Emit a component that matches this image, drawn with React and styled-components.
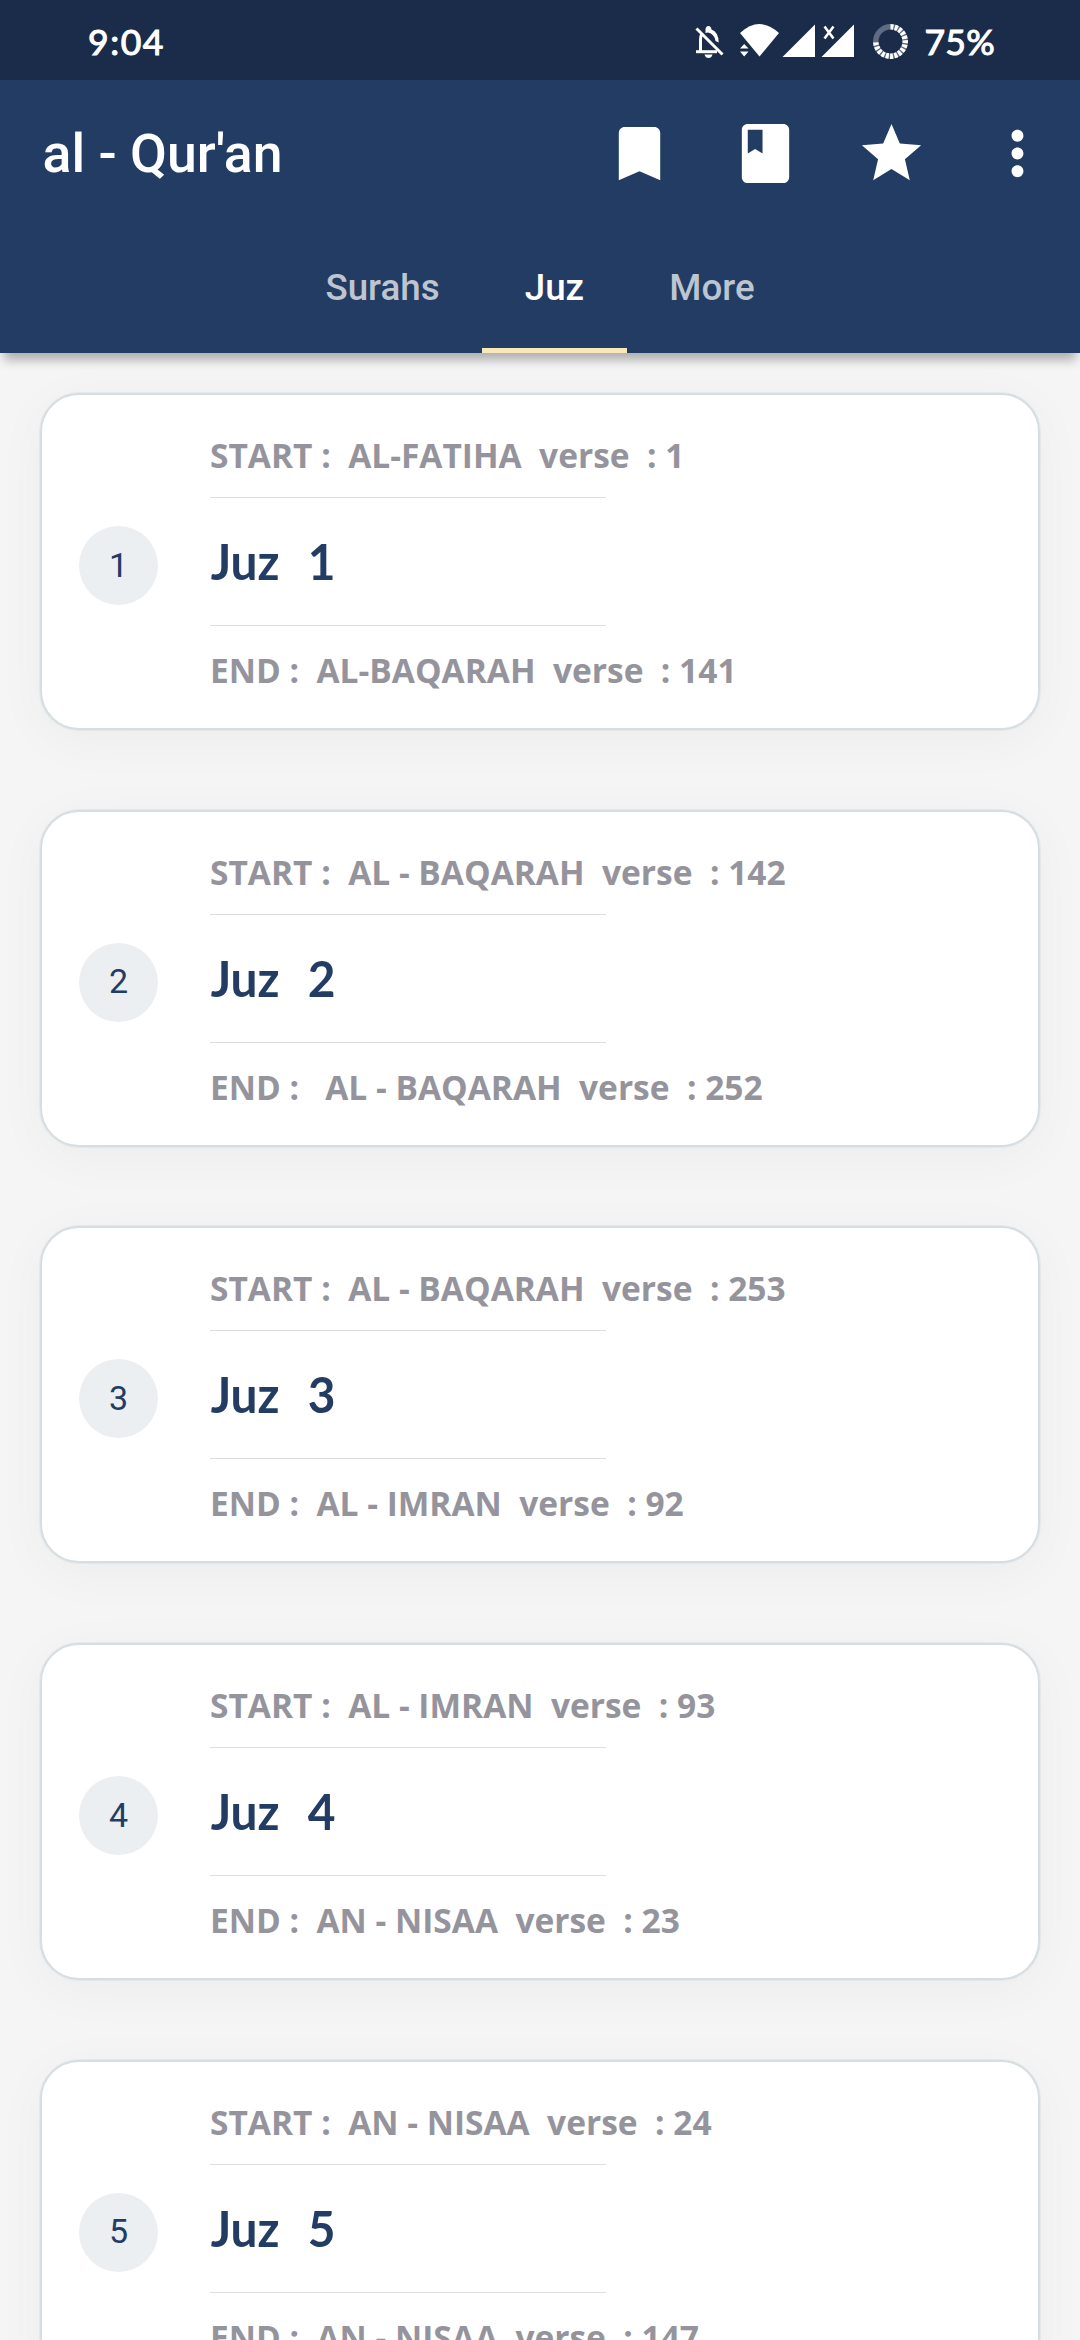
import React from "react";
import styled, { createGlobalStyle } from "styled-components";

const Global = createGlobalStyle`
  * { box-sizing: border-box; }
  html, body { margin: 0; padding: 0; background: #f5f5f5; }
  body { width: 1080px; height: 2340px; overflow: hidden; }
`;

const Screen = styled.div`
  width: 1080px;
  height: 2340px;
  overflow: hidden;
  display: flex;
  flex-direction: column;
  background: #f5f5f5;
  font-family: Roboto, sans-serif;
`;

const StatusBar = styled.div`
  height: 80px;
  flex: none;
  display: flex;
  align-items: center;
  justify-content: space-between;
  padding: 2px 85px 0 88px;
  background: #1a2c49;
  color: #fff;
`;

const StatusText = styled.span`
  padding-top: 2px;
  font: 400 35.5px/48px Lato, sans-serif;
  letter-spacing: ${(p) => p.$tracking}px;
  -webkit-text-stroke: 1.1px #fff;
`;

const StatusIcons = styled.div`
  display: flex;
  align-items: center;
  gap: 16px;
  height: 48px;
  svg { display: block; }
`;

const Header = styled.header`
  flex: none;
  height: 273px;
  background: #233c63;
  color: #fff;
  display: flex;
  flex-direction: column;
  z-index: 1;
  box-shadow: 0 11px 10px -4px rgba(0, 0, 0, 0.29);
`;

const Toolbar = styled.div`
  height: 147px;
  display: flex;
  align-items: center;
  justify-content: space-between;
  padding-left: 42.6px;
`;

const Title = styled.h1`
  margin: 0;
  font: 500 53.6px/62px Roboto, sans-serif;
`;

const Actions = styled.div`
  display: flex;
  align-items: center;
  margin-right: -0.5px;
`;

const Action = styled.button`
  width: 126px;
  height: 126px;
  padding: 0;
  border: 0;
  background: none;
  color: #fff;
  display: grid;
  place-items: center;
  svg { display: block; }
`;

const Tabs = styled.nav`
  flex: 1;
  display: flex;
  justify-content: center;
`;

const Tab = styled.div`
  height: 126px;
  padding: 0 42.6px;
  display: grid;
  place-items: center;
  font: 500 36.75px/44px Roboto, sans-serif;
  color: ${(p) => (p.$active ? "#fff" : "#bdc5d0")};
  border-bottom: 5px solid ${(p) => (p.$active ? "#f8e8b9" : "transparent")};
`;

const List = styled.main`
  flex: none;
  display: flex;
  flex-direction: column;
  gap: 79.7px;
  padding: 40px 40px 0;
`;

const Card = styled.article`
  flex: none;
  height: 337px;
  display: flex;
  align-items: flex-start;
  padding-left: 37px;
  border: 2px solid #d6dee2;
  border-radius: 39px;
  background: #fff;
  box-shadow: 0 0 0 1px rgba(214, 222, 226, 0.45), 0 10px 52px rgba(0, 0, 0, 0.04);
`;

const Badge = styled.div`
  width: 79px;
  height: 79px;
  margin-top: 131px;
  padding-bottom: 2px;
  border-radius: 50%;
  display: grid;
  place-items: center;
  background: #ebeff2;
  color: #233c63;
  font: 400 34px/40px Roboto, sans-serif;
`;

const Details = styled.div`
  margin: 37px 0 0 52px;
  display: flex;
  flex-direction: column;
  align-items: flex-start;
`;

const Verse = styled.div`
  height: 65px;
  padding-top: ${(p) => (p.$end ? "21px" : "0")};
  white-space: pre;
  font: 700 33.5px/47px "Open Sans", sans-serif;
  color: #95949d;
`;

const Rule = styled.div`
  width: 396px;
  height: 1px;
  background: #dedede;
`;

const Name = styled.h2`
  margin: 0;
  padding-left: 0.7px;
  height: 127px;
  white-space: pre;
  font: 700 48.8px/127px Lato, sans-serif;
  word-spacing: 2.6px;
  transform: scaleX(0.98);
  transform-origin: left center;
  color: #233c63;
`;

const juz = [
  ["START :  AL-FATIHA  verse  : 1", "END :  AL-BAQARAH  verse  : 141"],
  ["START :  AL - BAQARAH  verse  : 142", "END :   AL - BAQARAH  verse  : 252"],
  ["START :  AL - BAQARAH  verse  : 253", "END :  AL - IMRAN  verse  : 92"],
  ["START :  AL - IMRAN  verse  : 93", "END :  AN - NISAA  verse  : 23"],
  ["START :  AN - NISAA  verse  : 24", "END :  AN - NISAA  verse  : 147"],
];

const StatusGlyphs = () => (
  <svg width="216" height="48" viewBox="692 17 216 48" fill="#fff">
    <g fill="none" stroke="#fff" strokeWidth="3">
      <path d="M696.5 28.5L722.5 54.5" />
      <path d="M696 51.700H717" />
      <path d="M700.5 52V40Q700.5 36 702 33.5" />
    </g>
    <path d="M705.500 33V29Q706 26 708.500 26Q711 26 711.500 29.500Q718.500 32 718.700 42.500L715.500 41Q714.500 34 708 32.500Z" />
    <path d="M704.500 54.500H712.500Q711.500 58 708.500 58Q705.500 58 704.500 54.500Z" />
    <path d="M740 33Q759.500 15 779 33L759.500 56.500Z" />
    <path d="M740 48.500L744.200 44L748.500 48.500ZM740 51.500H748.500L744.200 56.500Z" />
    <path d="M782.500 57L815 24.500V57Z" />
    <path d="M821.500 57L854 24.500V57Z" />
    <path d="M824.500 26.500L833.500 38.500M833.500 26.500L824.500 38.500" stroke="#fff" strokeWidth="2.600" />
    <circle cx="890.500" cy="41.500" r="14.700" fill="none" stroke="#5f6b80" strokeWidth="5.500" />
    <path d="M890.500 26.800A14.700 14.700 0 1 1 875.800 41.500" fill="none" stroke="#fff" strokeWidth="5.500" strokeDasharray="3 1.330" />
  </svg>
);

const Glyph = ({ d }) => (
  <svg width="71" height="71" viewBox="0 0 24 24" fill="currentColor"><path d={d} /></svg>
);

const icons = [
  "M17 3H7c-1.100 0-1.990.9-1.990 2L5 21l7-3 7 3V5c0-1.100-.9-2-2-2z",
  "M18 2H6c-1.100 0-2 .9-2 2v16c0 1.100.9 2 2 2h12c1.100 0 2-.9 2-2V4c0-1.100-.9-2-2-2zM6 4h5v8l-2.500-1.500L6 12V4z",
  "M12 17.270L18.180 21l-1.640-7.030L22 9.240l-7.190-.61L12 2 9.190 8.630 2 9.240l5.460 4.730L5.820 21z",
  "M12 8c1.100 0 2-.9 2-2s-.9-2-2-2-2 .9-2 2 .9 2 2 2zm0 2c-1.100 0-2 .9-2 2s.9 2 2 2 2-.9 2-2-.9-2-2-2zm0 6c-1.100 0-2 .9-2 2s.9 2 2 2 2-.9 2-2-.9-2-2-2z",
];

export default function App() {
  return (
    <Screen>
      <Global />
      <StatusBar>
        <StatusText $tracking={1.6}>9:04</StatusText>
        <StatusIcons>
          <StatusGlyphs />
          <StatusText $tracking={0.3}>75%</StatusText>
        </StatusIcons>
      </StatusBar>
      <Header>
        <Toolbar>
          <Title>al - Qur'an</Title>
          <Actions>
            {icons.map((d) => (
              <Action key={d}><Glyph d={d} /></Action>
            ))}
          </Actions>
        </Toolbar>
        <Tabs>
          <Tab>Surahs</Tab>
          <Tab $active>Juz</Tab>
          <Tab>More</Tab>
        </Tabs>
      </Header>
      <List>
        {juz.map(([start, end], i) => (
          <Card key={i}>
            <Badge>{i + 1}</Badge>
            <Details>
              <Verse>{start}</Verse>
              <Rule />
              <Name>{`Juz  ${i + 1}`}</Name>
              <Rule />
              <Verse $end>{end}</Verse>
            </Details>
          </Card>
        ))}
      </List>
    </Screen>
  );
}
